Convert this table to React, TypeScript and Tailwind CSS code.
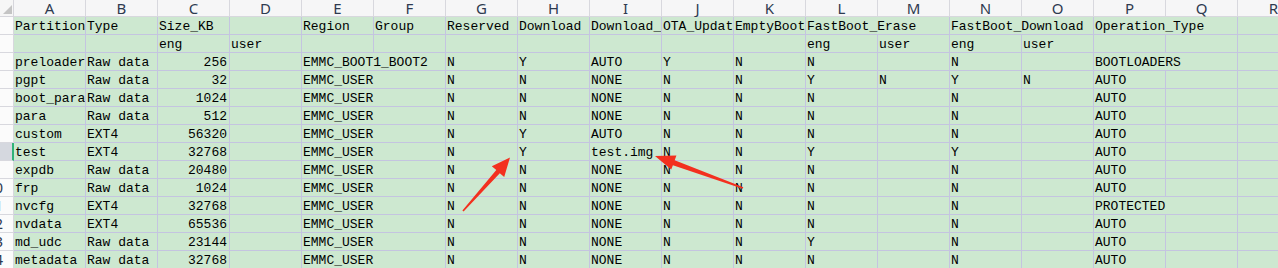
import React from "react";

const COLS = ["A", "B", "C", "D", "E", "F", "G", "H", "I", "J", "K", "L", "M", "N", "O", "P", "Q", "R"];

// one entry per column A..R, "" for an empty cell
const ROWS: string[][] = [
  ["Partition", "Type", "Size_KB", "", "Region", "Group", "Reserved", "Download", "Download_File", "OTA_Update", "EmptyBoot_Needed", "FastBoot_Erase", "", "FastBoot_Download", "", "Operation_Type", "", ""],
  ["", "", "eng", "user", "", "", "", "", "", "", "", "eng", "user", "eng", "user", "", "", ""],
  ["preloader", "Raw data", "256", "", "EMMC_BOOT1_BOOT2", "", "N", "Y", "AUTO", "Y", "N", "N", "", "N", "", "BOOTLOADERS", "", ""],
  ["pgpt", "Raw data", "32", "", "EMMC_USER", "", "N", "N", "NONE", "N", "N", "Y", "N", "Y", "N", "AUTO", "", ""],
  ["boot_para", "Raw data", "1024", "", "EMMC_USER", "", "N", "N", "NONE", "N", "N", "N", "", "N", "", "AUTO", "", ""],
  ["para", "Raw data", "512", "", "EMMC_USER", "", "N", "N", "NONE", "N", "N", "N", "", "N", "", "AUTO", "", ""],
  ["custom", "EXT4", "56320", "", "EMMC_USER", "", "N", "Y", "AUTO", "N", "N", "N", "", "N", "", "AUTO", "", ""],
  ["test", "EXT4", "32768", "", "EMMC_USER", "", "N", "Y", "test.img", "N", "N", "Y", "", "Y", "", "AUTO", "", ""],
  ["expdb", "Raw data", "20480", "", "EMMC_USER", "", "N", "N", "NONE", "N", "N", "N", "", "N", "", "AUTO", "", ""],
  ["frp", "Raw data", "1024", "", "EMMC_USER", "", "N", "N", "NONE", "N", "N", "N", "", "N", "", "AUTO", "", ""],
  ["nvcfg", "EXT4", "32768", "", "EMMC_USER", "", "N", "N", "NONE", "N", "N", "N", "", "N", "", "PROTECTED", "", ""],
  ["nvdata", "EXT4", "65536", "", "EMMC_USER", "", "N", "N", "NONE", "N", "N", "N", "", "N", "", "AUTO", "", ""],
  ["md_udc", "Raw data", "23144", "", "EMMC_USER", "", "N", "N", "NONE", "N", "N", "Y", "", "N", "", "AUTO", "", ""],
  ["metadata", "Raw data", "32768", "", "EMMC_USER", "", "N", "N", "NONE", "N", "N", "N", "", "N", "", "AUTO", "", ""],
];

const SPAN: Record<number, string> = { 1: "", 2: "col-span-2", 3: "col-span-3" };
const SELECTED_ROW = 8;

// text spills into empty cells on its right, like a spreadsheet does
function layoutRow(row: string[]) {
  const out: { text: string; span: number }[] = [];
  let i = 0;
  while (i < row.length) {
    const text = row[i];
    let span = 1;
    const need = text.length * 7.8 + 2;
    while (need > span * 72 - 1 && i + span < row.length && row[i + span] === "" && !/^\d+$/.test(text)) span++;
    out.push({ text, span });
    i += span;
  }
  return out;
}

function CornerCell() {
  return (
    <div className="bg-[#f6f6f6] border-r border-b border-[#d6d6dc] flex items-end justify-end">
      <svg width="12" height="12" viewBox="0 0 12 12" className="mb-[1px]">
        <polygon points="2,11 11,11 11,2" fill="#c4c4c4" />
      </svg>
    </div>
  );
}

function Arrows() {
  return (
    <svg className="absolute left-0 top-0 pointer-events-none" width="1278" height="268">
      <polygon
        fill="#f3301f"
        points="462.4,210.5 496.3,169.9 491.8,166.3 510,157.5 504.2,176.9 499.8,173.2 463.6,211.5"
      />
      <polygon
        fill="#f3301f"
        points="743.3,187.2 674.7,160.3 676.4,155.5 655,156 671.2,169.6 672.9,165.2 742.7,188.8"
      />
    </svg>
  );
}

export default function App() {
  return (
    <div className="relative w-[1278px] h-[268px] overflow-hidden bg-white">
      <div className="grid grid-cols-[14px_repeat(18,72px)] grid-rows-[17px_repeat(14,18px)] w-max">
        <CornerCell />
        {COLS.map((c) => (
          <div
            key={c}
            className="bg-[#f6f6f7] border-r border-b border-[#d8d8de] flex items-center justify-center font-['Noto_Sans',sans-serif] text-[15px] leading-[16px] text-[#2e3a50]"
          >
            {c}
          </div>
        ))}

        {ROWS.map((row, r) => {
          const n = r + 1;
          const selected = n === SELECTED_ROW;
          return (
            <React.Fragment key={n}>
              <div
                className={
                  selected
                    ? "bg-[#d5d8df] border-b border-[#d8d8de] border-r-2 border-r-[#2fb378]"
                    : "bg-[#fbfbfb] border-r border-b border-[#d8d8de] flex justify-end items-center overflow-hidden pr-[10px] font-['Noto_Sans',sans-serif] text-[15px] leading-[17px] text-[#2e3a50]"
                }
              >
                {n >= 10 && !selected ? n : null}
              </div>
              {layoutRow(row).map((cell, i) => {
                const num = /^\d+$/.test(cell.text);
                return (
                  <div
                    key={i}
                    className={`${SPAN[cell.span]} bg-[#cde8d0] border-r border-b border-[#c4c4e0] overflow-hidden whitespace-nowrap flex items-end ${
                      num ? "justify-end pr-[2px]" : "pl-[1px]"
                    } font-['Liberation_Mono','DejaVu_Sans_Mono',monospace] text-[13px] leading-[15px] text-black`}
                  >
                    {cell.text}
                  </div>
                );
              })}
            </React.Fragment>
          );
        })}
      </div>
      <Arrows />
    </div>
  );
}
